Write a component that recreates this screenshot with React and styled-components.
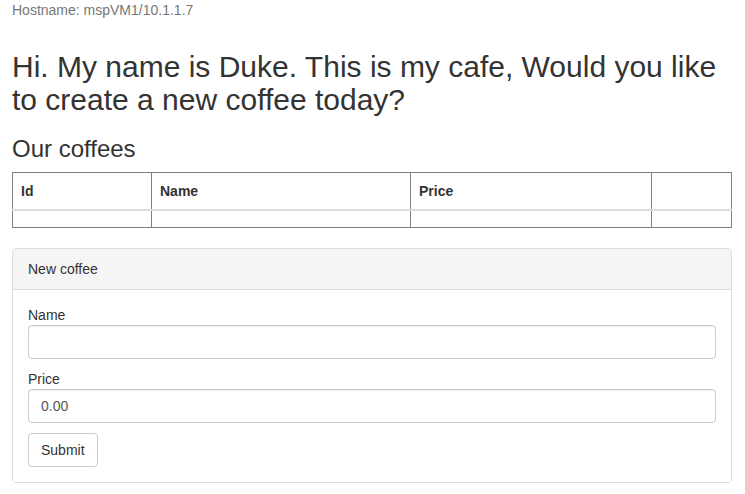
import React from 'react'
import styled, { createGlobalStyle } from 'styled-components'

const GlobalStyle = createGlobalStyle`
  body {
    margin: 0;
    font-family: "Liberation Sans", Arial, sans-serif;
    font-size: 14px;
    line-height: 20px;
    color: #333;
    background: #fff;
  }
  * { box-sizing: border-box; }
`

const Page = styled.div`
  padding: 0 13px 0 12px;
`

const Hostname = styled.div`
  color: #777;
`

const Title = styled.h1`
  font-size: 30px;
  font-weight: 500;
  line-height: 1.1;
  margin: 30px 0 0;
`

const Subtitle = styled.h3`
  font-size: 24px;
  font-weight: 500;
  line-height: 1.1;
  margin: 20px 0 10px;
`

const Table = styled.table`
  width: 100%;
  border-collapse: collapse;
  table-layout: fixed;
  margin-bottom: 20px;

  th, td {
    border: 1px solid #808080;
    padding: 8px;
    text-align: left;
    line-height: 20px;
  }

  th {
    font-weight: bold;
    border-bottom: 2px solid #ddd;
  }
`

const Panel = styled.div`
  border: 1px solid #ddd;
  border-radius: 4px;
  overflow: hidden;
`

const PanelHeading = styled.div`
  background: #f5f5f5;
  border-bottom: 1px solid #ddd;
  padding: 10px 15px;
`

const PanelBody = styled.form`
  padding: 15px;
`

const FormGroup = styled.div`
  margin-bottom: 10px;
`

const Label = styled.label`
  display: block;
  font-weight: normal;
`

const Input = styled.input`
  display: block;
  width: 100%;
  height: 34px;
  padding: 6px 12px;
  font-family: inherit;
  font-size: 14px;
  color: #555;
  border: 1px solid #ccc;
  border-radius: 4px;
  box-shadow: inset 0 1px 1px rgba(0, 0, 0, 0.075);
  outline: none;
`

const Button = styled.button`
  height: 34px;
  padding: 6px 12px;
  font-family: inherit;
  font-size: 14px;
  line-height: 20px;
  color: #333;
  background: #fff;
  border: 1px solid #ccc;
  border-radius: 4px;
`

const App = () => {
  return (
    <Page>
      <GlobalStyle />
      <Hostname>Hostname: mspVM1/10.1.1.7</Hostname>
      <Title>Hi. My name is Duke. This is my cafe, Would you like to create a new coffee today?</Title>
      <Subtitle>Our coffees</Subtitle>
      <Table>
        <colgroup>
          <col style={{ width: 139 }} />
          <col style={{ width: 259 }} />
          <col style={{ width: 241 }} />
          <col />
        </colgroup>
        <thead>
          <tr>
            <th>Id</th>
            <th>Name</th>
            <th>Price</th>
            <th></th>
          </tr>
        </thead>
        <tbody>
          <tr>
            <td></td>
            <td></td>
            <td></td>
            <td></td>
          </tr>
        </tbody>
      </Table>
      <Panel>
        <PanelHeading>New coffee</PanelHeading>
        <PanelBody onSubmit={e => e.preventDefault()}>
          <FormGroup>
            <Label>Name</Label>
            <Input type="text" />
          </FormGroup>
          <FormGroup>
            <Label>Price</Label>
            <Input type="text" defaultValue="0.00" />
          </FormGroup>
          <Button type="submit">Submit</Button>
        </PanelBody>
      </Panel>
    </Page>
  )
}

export default App
